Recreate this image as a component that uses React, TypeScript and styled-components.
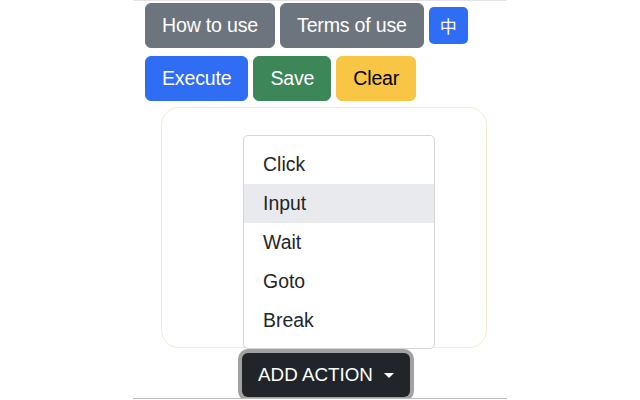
import React from "react";
import styled, { createGlobalStyle } from "styled-components";

const Global = createGlobalStyle`
  html, body { margin: 0; padding: 0; background: #ffffff; }
  body { font-family: "Liberation Sans", Arial, sans-serif; color: #212529; }
  * { box-sizing: border-box; }
`;

const Frame = styled.div`
  width: 374px;
  height: 399px;
  margin: 0 auto;
  border-top: 1px solid #e4e4e4;
  border-bottom: 1px solid #bdbdbd;
  overflow: hidden;
  padding: 2px 0 0 12px;
  display: flex;
  flex-direction: column;
`;

const Row = styled.div<{ $top?: number }>`
  display: flex;
  align-items: center;
  gap: 5px;
  margin-top: ${(p) => p.$top ?? 0}px;
`;

const variants: Record<string, { bg: string; fg: string }> = {
  secondary: { bg: "#6c757d", fg: "#ffffff" },
  primary: { bg: "#2f6ef4", fg: "#ffffff" },
  success: { bg: "#3c8657", fg: "#ffffff" },
  warning: { bg: "#f8c545", fg: "#000000" },
};

const Btn = styled.button<{ $v: string }>`
  height: 45px;
  padding: 0 16px;
  border: 1px solid ${(p) => variants[p.$v].bg};
  border-radius: 6px;
  background: ${(p) => variants[p.$v].bg};
  color: ${(p) => variants[p.$v].fg};
  font-family: "Liberation Sans", Arial, sans-serif;
  font-size: 19.6px;
  letter-spacing: -0.2px;
  line-height: 1;
  cursor: pointer;
`;

const LangBtn = styled.button`
  width: 39px;
  height: 37px;
  padding: 0;
  border: none;
  border-radius: 5px;
  background: #2f6ef4;
  color: #ffffff;
  font-family: "Noto Sans CJK SC", sans-serif;
  font-size: 17px;
  line-height: 1;
`;

const Card = styled.div`
  margin: 6px 0 0 16px;
  width: 326px;
  height: 241px;
  border: 1.5px solid #f6ebcd;
  border-radius: 18px;
  background: #ffffff;
`;

const ActionBar = styled.div`
  margin-top: 5px;
  display: flex;
  justify-content: center;
`;

const DropWrap = styled.div`
  position: relative;
`;

const DarkBtn = styled.button`
  height: 44px;
  padding: 0 16px;
  display: flex;
  align-items: center;
  border: none;
  border-radius: 6px;
  background: #212529;
  color: #ffffff;
  font-family: "Liberation Sans", Arial, sans-serif;
  font-size: 18.8px;
  box-shadow: 0 0 0 4px #a2a2a2;
`;

const Caret = styled.span`
  margin-left: 11px;
  width: 0;
  height: 0;
  border-left: 5.5px solid transparent;
  border-right: 5.5px solid transparent;
  border-top: 5.5px solid #ffffff;
`;

const Menu = styled.ul`
  position: absolute;
  left: 1px;
  bottom: calc(100% + 4px);
  width: 192px;
  margin: 0;
  padding: 9px 0 8px;
  list-style: none;
  background: #ffffff;
  border: 1px solid #d6d6d6;
  border-radius: 5px;
  z-index: 5;
`;

const Item = styled.li<{ $active?: boolean }>`
  height: 39px;
  line-height: 39px;
  padding: 0 19px;
  font-size: 19.4px;
  color: #212529;
  background: ${(p) => (p.$active ? "#e9eaed" : "transparent")};
`;

const items = ["Click", "Input", "Wait", "Goto", "Break"];

export default function App() {
  return (
    <>
      <Global />
      <Frame>
        <Row>
          <Btn $v="secondary">How to use</Btn>
          <Btn $v="secondary">Terms of use</Btn>
          <LangBtn>中</LangBtn>
        </Row>
        <Row $top={8}>
          <Btn $v="primary">Execute</Btn>
          <Btn $v="success">Save</Btn>
          <Btn $v="warning">Clear</Btn>
        </Row>
        <Card />
        <ActionBar>
          <DropWrap>
            <Menu>
              {items.map((t) => (
                <Item key={t} $active={t === "Input"}>
                  {t}
                </Item>
              ))}
            </Menu>
            <DarkBtn>
              ADD ACTION
              <Caret />
            </DarkBtn>
          </DropWrap>
        </ActionBar>
      </Frame>
    </>
  );
}
